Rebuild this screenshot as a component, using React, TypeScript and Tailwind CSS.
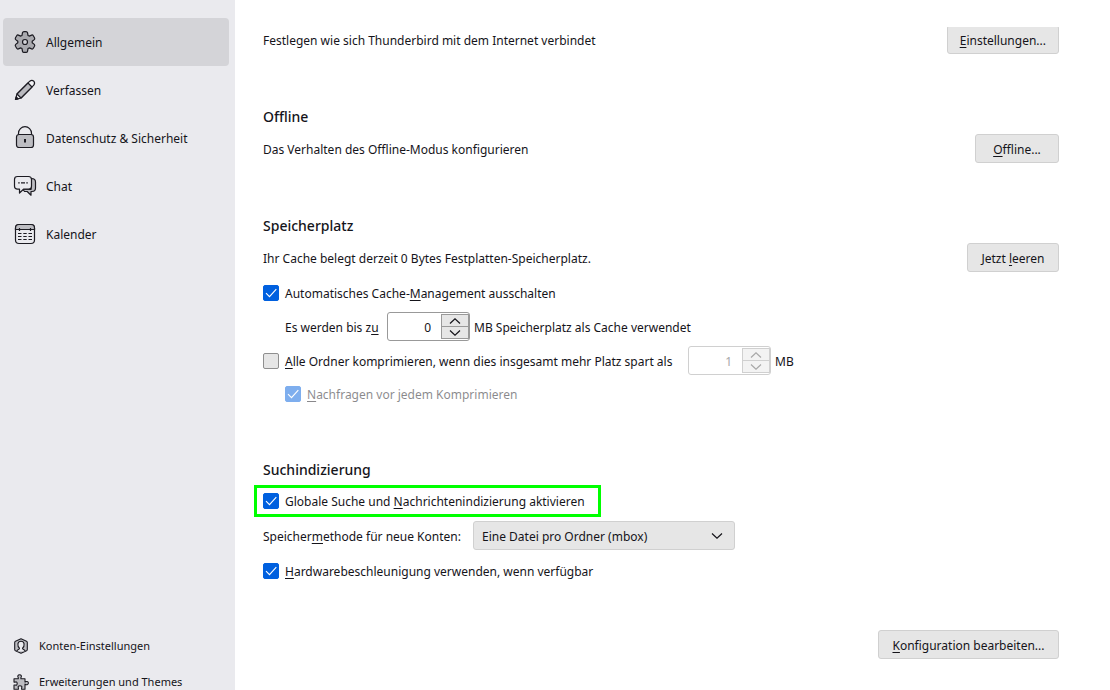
import type { ComponentProps, ReactNode } from "react";

function GearIcon() {
  return (
    <svg className="size-6 shrink-0" viewBox="0 0 24 24" fill="#a9a9ae" stroke="#1c1b22" strokeWidth="1.2" strokeLinejoin="round">
      <path d="M9 5.4L9.5 2.7Q9.8 1.6 11 1.6H13Q14.2 1.6 14.5 2.7L15 5.4L16.2 6.1L18.6 5.1Q19.7 4.7 20.3 5.7L21.5 7.7Q22.1 8.8 21.3 9.6L19.2 11.3V12.7L21.3 14.4Q22.1 15.2 21.5 16.3L20.3 18.3Q19.7 19.3 18.6 18.9L16.2 17.9L15 18.6L14.5 21.3Q14.2 22.4 13 22.4H11Q9.8 22.4 9.5 21.3L9 18.6L7.8 17.9L5.4 18.9Q4.3 19.3 3.7 18.3L2.5 16.3Q1.9 15.2 2.7 14.4L4.8 12.7V11.3L2.7 9.6Q1.9 8.8 2.5 7.7L3.7 5.7Q4.3 4.7 5.4 5.1L7.8 6.1Z" />
      <circle cx="12" cy="12" r="2.5" fill="#d4d4d8" />
    </svg>
  );
}

function PencilIcon() {
  return (
    <svg className="size-6 shrink-0" viewBox="0 0 24 24" fill="none" stroke="#1c1b22" strokeWidth="1.2" strokeLinejoin="round">
      <path d="M2.5 21.5L4 16L16.8 3.2Q18.9 1.6 20.8 3.2Q22.4 5.1 20.8 7.2L8 20Z" fill="#f4f4f7" />
      <path d="M4 16L15 5L19 9L8 20Z" fill="#b9b9be" />
      <path d="M2.5 21.5L3.2 18.8L5.2 20.8Z" fill="#1c1b22" />
    </svg>
  );
}

function LockIcon() {
  return (
    <svg className="size-6 shrink-0" viewBox="0 0 24 24" fill="none" stroke="#1c1b22" strokeWidth="1.2">
      <path d="M5.5 8.5V7.2A6.5 6.5 0 0 1 18.5 7.2V8.5" />
      <rect x="3.5" y="8.5" width="17" height="13" rx="2.5" fill="#bdbdc2" />
      <path d="M12 13V16.5" strokeWidth="2" />
    </svg>
  );
}

function ChatIcon() {
  return (
    <svg className="size-6 shrink-0" viewBox="0 0 24 24" fill="none" stroke="#1c1b22" strokeWidth="1.2" strokeLinejoin="round">
      <path d="M18.5 4.5Q22.5 4.5 22.5 8V14Q22.5 17.5 19 17.5H18V21.2L14.2 17.5H11.5L10 15.5H18Z" fill="#bdbdc2" />
      <path d="M4.5 2.5H15.5Q18.5 2.5 18.5 5.5V12.2Q18.5 15.2 15.5 15.2H10.5L6.5 19V15.2H4.5Q1.5 15.2 1.5 12.2V5.5Q1.5 2.5 4.5 2.5Z" fill="#eaeaee" />
      <path d="M5.2 8.8H6.7M8 8.8H12M13.3 8.8H14.8" />
    </svg>
  );
}

function CalendarIcon() {
  return (
    <svg className="size-6 shrink-0" viewBox="0 0 24 24" fill="none" stroke="#1c1b22" strokeWidth="1.2">
      <rect x="2.5" y="2.5" width="19" height="19" rx="3.5" />
      <path d="M2.5 7.5V6Q2.5 2.5 6 2.5H18Q21.5 2.5 21.5 6V7.5Z" fill="#bdbdc2" />
      <path d="M6.5 6V9M17.5 6V9M5 11.5H8.5M10.3 11.5H13.7M15.5 11.5H19M5 14.5H8.5M10.3 14.5H13.7M15.5 14.5H19M5 17.5H8.5M10.3 17.5H13.7M15.5 17.5H19" />
    </svg>
  );
}

function AccountIcon() {
  return (
    <svg className="size-4 shrink-0" viewBox="0 0 16 16" fill="none" stroke="#1c1b22" strokeWidth="1.1" strokeLinejoin="round">
      <path d="M8 0.8L13.5 3.2Q14.3 3.6 14.3 4.5V11.5Q14.3 12.4 13.5 12.8L8 15.2L2.5 12.8Q1.7 12.4 1.7 11.5V4.5Q1.7 3.6 2.5 3.2Z" fill="#bdbdc2" />
      <path d="M4 13.2C4 11.5 6.5 11.6 6.5 10.2C5 9 4.7 7.5 4.9 5.8C5.2 4.1 6.4 3.3 8 3.3S10.8 4.1 11.1 5.8C11.3 7.5 11 9 9.5 10.2C9.5 11.6 12 11.5 12 13.2" fill="#eaeaee" />
    </svg>
  );
}

function PuzzleIcon() {
  return (
    <svg className="size-4 shrink-0" viewBox="0 0 16 16" fill="#bdbdc2" stroke="#1c1b22" strokeWidth="1.1" strokeLinejoin="round">
      <path d="M1 4.8H5.3V3.6C4.3 2.6 4.8 0.8 6.6 0.8S8.9 2.6 7.9 3.6V4.8H12V8C13.3 7 15.4 7.4 15.4 9.1S13.3 11.2 12 10.2V15.2H8.6V13.8C9.4 12.8 8.6 11.8 7 11.8S4.6 12.8 5.4 13.8V15.2H1V11H2.4C3.4 11.6 4.2 10.8 4.2 9.6S3.4 7.5 2.4 8.1H1Z" />
    </svg>
  );
}

function Chevron({ up = false }: { up?: boolean }) {
  return (
    <svg className="h-1.5 w-3" viewBox="0 0 12 6" fill="none" stroke="currentColor" strokeWidth="1.2">
      <path d={up ? "M1 5.5L6 0.8L11 5.5" : "M1 0.5L6 5.2L11 0.5"} />
    </svg>
  );
}

// Underlined access key
function Key({ children }: { children: string }) {
  return <span className="underline underline-offset-2">{children}</span>;
}

const categories = [
  { label: "Allgemein", icon: <GearIcon />, selected: true },
  { label: "Verfassen", icon: <PencilIcon /> },
  { label: "Datenschutz & Sicherheit", icon: <LockIcon /> },
  { label: "Chat", icon: <ChatIcon /> },
  { label: "Kalender", icon: <CalendarIcon /> },
];

function Sidebar() {
  return (
    <aside className="flex w-[235px] shrink-0 flex-col justify-between bg-[#eaeaee] pt-[18px] pr-1.5 pl-[3px]">
      <nav>
        {categories.map((item) => (
          <a
            key={item.label}
            href="#"
            className={`flex h-12 items-center gap-[9px] rounded px-2.5 ${item.selected ? "bg-[#d4d4d8]" : ""}`}
          >
            {item.icon}
            <span className="pt-0.5">{item.label}</span>
          </a>
        ))}
      </nav>
      <div className="-mb-2.5 text-[11px]">
        <a href="#" className="flex h-9 items-center gap-2.5 px-2.5">
          <AccountIcon />
          Konten-Einstellungen
        </a>
        <a href="#" className="flex h-9 items-center gap-2.5 px-2.5">
          <PuzzleIcon />
          Erweiterungen und Themes
        </a>
      </div>
    </aside>
  );
}

function Button({ children, className = "" }: { children: ReactNode; className?: string }) {
  return (
    <button className={`h-[29px] shrink-0 rounded-[3px] border border-[#d0d0d0] bg-[#e6e6e6] px-3 pt-0.5 ${className}`}>
      {children}
    </button>
  );
}

function Checkbox({ children, ...props }: ComponentProps<"input">) {
  return (
    <label className="flex h-[22px] items-center gap-1.5 has-disabled:opacity-50">
      <span className="relative flex size-4">
        <input
          type="checkbox"
          className="peer size-4 appearance-none rounded-xs border border-[#8f8f8f] bg-[#e6e6e6] checked:border-[#0060df] checked:bg-[#0060df]"
          {...props}
        />
        <svg className="pointer-events-none absolute inset-0 hidden peer-checked:block" viewBox="0 0 16 16" fill="none" stroke="#fff" strokeWidth="1.1">
          <path d="M3 8.2L6.5 11.7L13.3 4.2" />
        </svg>
      </span>
      <span className="pt-0.5">{children}</span>
    </label>
  );
}

function NumberField({ disabled, ...props }: ComponentProps<"input">) {
  return (
    <span className={`flex h-[29px] w-[83px] items-center rounded-[3px] border bg-white ${disabled ? "border-[#d0d0d0] text-[#a8a8a8]" : "border-[#999999]"}`}>
      <input
        type="number"
        disabled={disabled}
        className="w-full min-w-0 appearance-none pt-0.5 pr-2.5 text-right outline-none [appearance:textfield] [&::-webkit-inner-spin-button]:appearance-none"
        {...props}
      />
      <span className={`flex h-[25px] w-7 shrink-0 flex-col divide-y border ${disabled ? "divide-[#d0d0d0] border-[#d0d0d0] bg-[#f3f3f3]" : "divide-[#999999] border-[#999999] bg-[#e6e6e6]"}`}>
        <button disabled={disabled} aria-label="Erhöhen" className="flex flex-1 items-center justify-center">
          <Chevron up />
        </button>
        <button disabled={disabled} aria-label="Verringern" className="flex flex-1 items-center justify-center">
          <Chevron />
        </button>
      </span>
    </span>
  );
}

function Heading({ children }: { children: string }) {
  return <h2 className="text-[14px] leading-[22px] font-medium">{children}</h2>;
}

export default function App() {
  return (
    <div className="flex h-screen overflow-hidden bg-white font-['Noto_Sans',sans-serif] text-[12px] leading-[18px] text-[#15141a]">
      <Sidebar />
      <main className="min-w-0 flex-1 pt-[27px] pr-[51px] pl-7">
        {/* Connection row, scrolled under the top edge */}
        <section className="flex h-[27px] items-end justify-between overflow-hidden">
          <p className="self-center">Festlegen wie sich Thunderbird mit dem Internet verbindet</p>
          <Button>
            <Key>E</Key>instellungen...
          </Button>
        </section>

        <section className="mt-[52px]">
          <Heading>Offline</Heading>
          <div className="mt-1.5 flex items-center justify-between">
            <p className="pt-0.5">Das Verhalten des Offline-Modus konfigurieren</p>
            <Button className="min-w-21">
              <Key>O</Key>ffline...
            </Button>
          </div>
        </section>

        <section className="mt-[52px]">
          <Heading>Speicherplatz</Heading>
          <div className="mt-1.5 flex items-center justify-between">
            <p className="pt-0.5">Ihr Cache belegt derzeit 0 Bytes Festplatten-Speicherplatz.</p>
            <Button className="min-w-23">
              Jetzt <Key>l</Key>eeren
            </Button>
          </div>
          <div className="mt-2.5">
            <Checkbox defaultChecked>
              Automatisches Cache-<Key>M</Key>anagement ausschalten
            </Checkbox>
          </div>
          <div className="mt-2 flex items-center gap-1 pl-[22px]">
            <label htmlFor="cache-size" className="min-w-[98px] pt-0.5">
              Es werden bis z<Key>u</Key>
            </label>
            <NumberField id="cache-size" defaultValue={0} />
            <span className="pt-0.5">MB Speicherplatz als Cache verwendet</span>
          </div>
          <div className="mt-[5px] flex items-center gap-1">
            <div className="min-w-[421px]">
              <Checkbox>
                <Key>A</Key>lle Ordner komprimieren, wenn dies insgesamt mehr Platz spart als
              </Checkbox>
            </div>
            <NumberField aria-label="MB" defaultValue={1} disabled />
            <span className="pt-0.5">MB</span>
          </div>
          <div className="mt-2 pl-[22px]">
            <Checkbox defaultChecked disabled>
              <Key>N</Key>achfragen vor jedem Komprimieren
            </Checkbox>
          </div>
        </section>

        <section className="mt-[54px]">
          <Heading>Suchindizierung</Heading>
          <div className="mt-1 -ml-[9px] flex h-8 w-[347px] items-center border-3 border-[#00ff00] pl-1.5">
            <Checkbox defaultChecked>
              Globale Suche und <Key>N</Key>achrichtenindizierung aktivieren
            </Checkbox>
          </div>
          <div className="mt-1 flex items-center gap-2">
            <label htmlFor="store-type" className="min-w-[202px] pt-0.5">
              Speicher<Key>m</Key>ethode für neue Konten:
            </label>
            <div className="relative">
              <select id="store-type" className="h-[29px] w-[262px] appearance-none rounded-[3px] border border-[#d0d0d0] bg-[#e6e6e6] pt-0.5 pl-2">
                <option>Eine Datei pro Ordner (mbox)</option>
                <option>Eine Datei pro Nachricht (maildir)</option>
              </select>
              <span className="pointer-events-none absolute inset-y-0 right-3 flex items-center">
                <Chevron />
              </span>
            </div>
          </div>
          <div className="mt-2.5">
            <Checkbox defaultChecked>
              <Key>H</Key>ardwarebeschleunigung verwenden, wenn verfügbar
            </Checkbox>
          </div>
        </section>

        <div className="mt-12 flex justify-end">
          <Button className="min-w-[181px]">
            <Key>K</Key>onfiguration bearbeiten...
          </Button>
        </div>
      </main>
    </div>
  );
}
